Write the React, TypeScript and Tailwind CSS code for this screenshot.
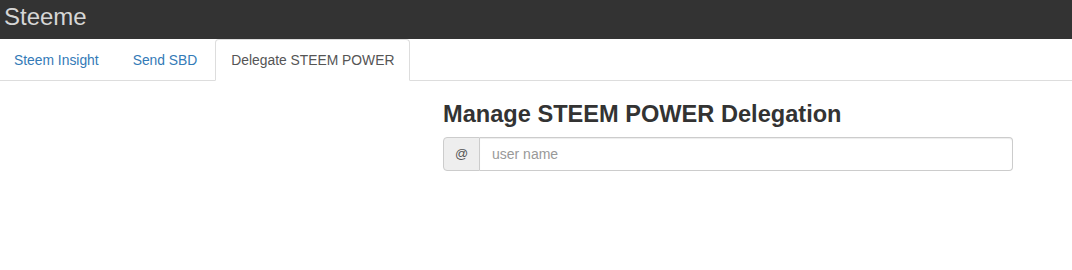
export default function App() {
  const tabs = ['Steem Insight', 'Send SBD', 'Delegate STEEM POWER']
  const active = 2

  return (
    <div className="min-h-screen bg-white text-[14px] text-[#333] font-['Liberation_Sans',Arial,sans-serif]">
      <div className="h-[39px] bg-[#333] flex items-start pt-[5px] px-[4px]">
        <span className="text-[24px] leading-none text-[#d6d6d6]">Steeme</span>
      </div>

      <ul className="flex border-b border-[#ddd] -ml-[2px] text-[13.85px]">
        {tabs.map((tab, i) => (
          <li key={tab} className="-mb-px mr-[2px]">
            <a
              href="#"
              className={`block px-[15px] py-[10px] leading-[20px] border rounded-t-[4px] ${
                i === active
                  ? 'border-[#ddd] border-b-transparent bg-white text-[#555]'
                  : 'border-transparent text-[#337ab7]'
              }`}
            >
              {tab}
            </a>
          </li>
        ))}
      </ul>

      <div className="pl-[443px] pr-[59px]">
        <h3 className="mt-[20px] mb-[10px] text-[23.6px] leading-[26px] font-bold">
          Manage STEEM POWER Delegation
        </h3>
        <div className="flex h-[34px]">
          <span className="w-[37px] flex items-center justify-center bg-[#eee] border border-[#ccc] rounded-l-[4px] text-[13px] text-[#555]">
            @
          </span>
          <input
            type="text"
            placeholder="user name"
            className="flex-1 px-[12px] border border-l-0 border-[#ccc] rounded-r-[4px] text-[14px] text-[#555] placeholder:text-[#999] shadow-[inset_0_1px_1px_rgba(0,0,0,0.075)] outline-none"
          />
        </div>
      </div>
    </div>
  )
}
